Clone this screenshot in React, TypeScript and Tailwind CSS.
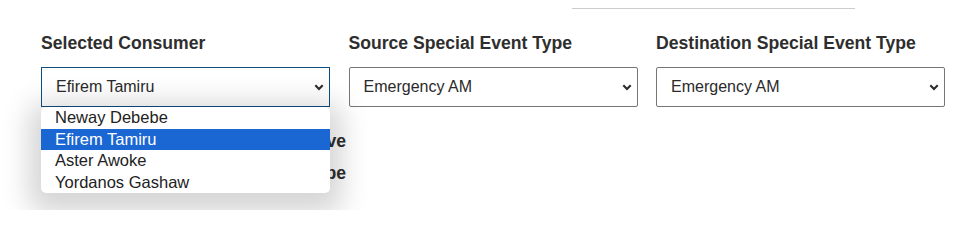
import React from "react";

const Chevron = () => (
  <svg width="10" height="7" viewBox="0 0 10 7" className="block">
    <path d="M1.3 1.3 L5 5 L8.7 1.3" fill="none" stroke="#2b2b2b" strokeWidth="2.1" strokeLinecap="butt" strokeLinejoin="miter" />
  </svg>
);

type SelProps = { value: string; focused?: boolean; options?: string[] };

const FakeSelect = ({ value, focused, options }: SelProps) => (
  <div className="relative mt-[11px]">
    <div
      className={
        focused
          ? "flex h-[40px] items-center justify-between border border-[#0e4d80] bg-white pl-[14px] pr-[5px]"
          : "flex h-[40px] items-center justify-between rounded-[2px] border border-[#767676] bg-white pl-[14px] pr-[5px]"
      }
    >
      <span className="text-[16px] leading-[20px] text-[#2a2a2a]">{value}</span>
      <Chevron />
    </div>
    {options && (
      <div className="absolute left-0 top-full z-10 w-full overflow-hidden rounded-[5px] bg-white shadow-[0_8px_28px_12px_rgba(0,0,0,0.17)]">
        {options.map((o) => (
          <div
            key={o}
            className={
              o === value
                ? "h-[21.5px] bg-[#1a66d3] pl-[14px] text-[16.5px] leading-[21.5px] text-white"
                : "h-[21.5px] pl-[14px] text-[16.5px] leading-[21.5px] text-[#222]"
            }
          >
            {o}
          </div>
        ))}
      </div>
    )}
  </div>
);

export default function App() {
  return (
    <div className="relative h-[210px] w-[979px] overflow-hidden bg-white pt-[8px] font-['Liberation_Sans',Arial,sans-serif]">
      <div className="ml-[572px] h-px w-[283px] bg-[#cccccc]" />
      <div className="ml-[41px] mt-[21px] grid w-[904px] grid-cols-3 gap-x-[18.5px]">
        <div>
          <div className="text-[17.6px] font-bold leading-[26px] text-[#2e2e2e]">Selected Consumer</div>
          <FakeSelect
            value="Efirem Tamiru"
            focused
            options={["Neway Debebe", "Efirem Tamiru", "Aster Awoke", "Yordanos Gashaw"]}
          />
        </div>
        <div>
          <div className="text-[17.6px] font-bold leading-[26px] text-[#2e2e2e]">Source Special Event Type</div>
          <FakeSelect value="Emergency AM" />
        </div>
        <div>
          <div className="text-[17.6px] font-bold leading-[26px] text-[#2e2e2e]">Destination Special Event Type</div>
          <FakeSelect value="Emergency AM" />
        </div>
      </div>
      <div className="ml-[41px] mt-[18px] w-[305px] text-right text-[17.6px] font-bold leading-[32px] text-[#2e2e2e]">
        <div>Consumer Active</div>
        <div>Special Event Type</div>
      </div>
    </div>
  );
}
